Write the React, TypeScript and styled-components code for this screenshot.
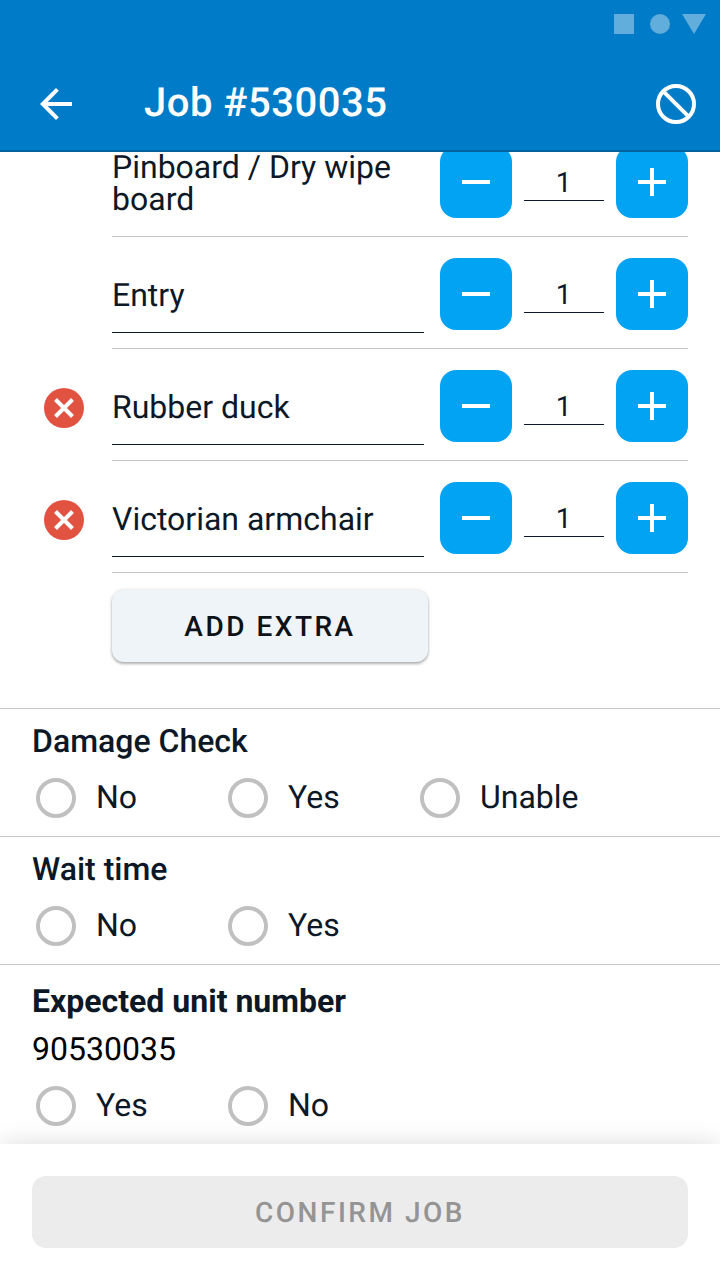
import React from "react";
import styled, { createGlobalStyle } from "styled-components";

const GlobalStyle = createGlobalStyle`
  *, *::before, *::after { box-sizing: border-box; }
  html, body { margin: 0; padding: 0; background: #fff; }
  body { overflow: hidden; }
  button, input { font: inherit; color: inherit; border: 0; padding: 0; margin: 0; background: none; outline: none; text-rendering: inherit; }
`;

const Screen = styled.div`
  display: flex;
  flex-direction: column;
  width: 720px;
  height: 1280px;
  overflow: hidden;
  background: #fff;
  color: #0d1826;
  font-family: Roboto, "Liberation Sans", sans-serif;
  font-size: 32px;
  text-rendering: geometricPrecision;
`;

const Header = styled.header`
  flex: none;
  height: 152px;
  background: #007bc7;
  border-bottom: 2px solid #0062a0;
`;

const StatusBar = styled.div`
  display: flex;
  justify-content: flex-end;
  height: 48px;
  padding: 14px 14px 0 0;
`;

const Toolbar = styled.div`
  display: flex;
  align-items: center;
  height: 112px;
  padding: 0 24px 0 40px;
`;

const Title = styled.h1`
  flex: 1;
  margin: -3px 0 0 72px;
  color: #fff;
  font-size: 40px;
  font-weight: 500;
  line-height: 48px;
  letter-spacing: 0.5px;
`;

const Content = styled.main`
  flex: 1;
  min-height: 0;
  overflow: hidden;
`;

const Items = styled.section`
  height: 584px;
  margin-top: -27px;
  border-bottom: 1px solid #c6c8ca;
`;

const ItemRow = styled.div`
  display: flex;
  height: 112px;
  padding-right: 32px;
`;

const RemoveSlot = styled.div`
  display: flex;
  justify-content: flex-end;
  width: 84px;
  margin-right: 28px;
  padding-top: 39px;
`;

const ItemBody = styled.div`
  display: flex;
  flex: 1;
  border-bottom: 1px solid #c6c6c6;
`;

const NameText = styled.div`
  width: 312px;
  margin-right: 16px;
  padding-top: 26px;
  line-height: 32px;
`;

const NameInput = styled.input`
  width: 312px;
  height: 76px;
  margin: 20px 16px 0 0;
  border-bottom: 1px solid #0d1826;
`;

const Stepper = styled.div`
  display: flex;
  gap: 12px;
  padding-top: 21px;
`;

const StepButton = styled.button`
  display: flex;
  align-items: center;
  justify-content: center;
  width: 72px;
  height: 72px;
  border-radius: 16px;
  background: #02a3f2;
`;

const Quantity = styled.input`
  width: 80px;
  height: 55px;
  padding: 18px 1px 0 0;
  border-bottom: 1px solid #0d1826;
  font-size: 28px;
  text-align: center;
`;

const AddButton = styled.button`
  display: block;
  width: 316px;
  height: 72px;
  margin: 17px 0 0 112px;
  border-radius: 12px;
  background: #eff4f8;
  box-shadow: 0 2px 3px rgba(0, 0, 0, 0.28), 0 0 4px rgba(0, 0, 0, 0.12);
  color: #0d1216;
  font-size: 28px;
  font-weight: 500;
  letter-spacing: 2.5px;
`;

const Question = styled.section<{ $height: number }>`
  height: ${(p) => p.$height}px;
  padding: 12px 32px 0;
  border-bottom: 1px solid #c6c8ca;
`;

const Heading = styled.h2<{ $bold?: boolean }>`
  margin: ${(p) => (p.$bold ? "4px 0 0" : "0")};
  font-size: 32px;
  font-weight: ${(p) => (p.$bold ? 700 : 500)};
  line-height: 40px;
`;

const UnitNumber = styled.div`
  margin-top: 8px;
  color: #000;
  line-height: 40px;
`;

const Options = styled.div`
  display: flex;
  margin-top: 17px;
`;

const Option = styled.label`
  display: flex;
  align-items: center;
  gap: 20px;
  width: 192px;
  height: 40px;
  padding-left: 4px;
`;

const RadioRing = styled.span`
  flex: none;
  width: 40px;
  height: 40px;
  border: 4px solid #c0c0c0;
  border-radius: 50%;
`;

const OptionLabel = styled.span`
  line-height: 38px;
  margin-top: -2px;
`;

const Footer = styled.footer`
  position: relative;
  flex: none;
  height: 136px;
  padding: 32px;
  background: #fff;
  box-shadow: 0 0 24px rgba(0, 0, 0, 0.14);
`;

const ConfirmButton = styled.button`
  width: 100%;
  height: 72px;
  border-radius: 14px;
  background: #ececec;
  color: #949494;
  font-size: 28px;
  font-weight: 500;
  letter-spacing: 2.5px;
`;

const items = [
  { name: "Pinboard / Dry wipe board", editable: false, removable: false },
  { name: "Entry", editable: true, removable: false },
  { name: "Rubber duck", editable: true, removable: true },
  { name: "Victorian armchair", editable: true, removable: true },
];

function StatusIcons() {
  return (
    <svg width="92" height="20" viewBox="0 0 92 20" fill="#61addb">
      <path d="M0 0h20v20H0zM68 0h24L80 20z" />
      <circle cx="46" cy="10" r="10" />
    </svg>
  );
}

function BackIcon() {
  return (
    <svg width="32" height="32" viewBox="0 0 32 32" fill="none" stroke="#fff" strokeWidth="4">
      <path d="M32 16H3M17.4 1.4L2.8 16l14.6 14.6" />
    </svg>
  );
}

function BlockIcon() {
  return (
    <svg width="40" height="40" viewBox="0 0 40 40" fill="none" stroke="#fff" strokeWidth="4">
      <circle cx="20" cy="20" r="18" />
      <path d="M7.3 7.3l25.4 25.4" />
    </svg>
  );
}

function RemoveIcon() {
  return (
    <svg width="40" height="40" viewBox="0 0 40 40" fill="none">
      <circle cx="20" cy="20" r="20" fill="#e25241" />
      <path d="M11.5 11.5l17 17M28.5 11.5l-17 17" stroke="#fff" strokeWidth="4" />
    </svg>
  );
}

function StepIcon({ plus }: { plus?: boolean }) {
  return (
    <svg width="28" height="28" viewBox="0 0 28 28" fill="#fff">
      <path d={plus ? "M0 12h12V0h4v12h12v4H16v12h-4V16H0z" : "M0 12h28v4H0z"} />
    </svg>
  );
}

function Choices({ options }: { options: string[] }) {
  return (
    <Options>
      {options.map((option) => (
        <Option key={option}>
          <RadioRing />
          <OptionLabel>{option}</OptionLabel>
        </Option>
      ))}
    </Options>
  );
}

export default function App() {
  return (
    <>
      <GlobalStyle />
      <Screen>
        <Header>
          <StatusBar>
            <StatusIcons />
          </StatusBar>
          <Toolbar>
            <BackIcon />
            <Title>Job #530035</Title>
            <BlockIcon />
          </Toolbar>
        </Header>
        <Content>
          <Items>
            {items.map((item) => (
              <ItemRow key={item.name}>
                <RemoveSlot>{item.removable && <RemoveIcon />}</RemoveSlot>
                <ItemBody>
                  {item.editable ? (
                    <NameInput defaultValue={item.name} />
                  ) : (
                    <NameText>{item.name}</NameText>
                  )}
                  <Stepper>
                    <StepButton aria-label="Decrease">
                      <StepIcon />
                    </StepButton>
                    <Quantity defaultValue="1" />
                    <StepButton aria-label="Increase">
                      <StepIcon plus />
                    </StepButton>
                  </Stepper>
                </ItemBody>
              </ItemRow>
            ))}
            <AddButton>ADD EXTRA</AddButton>
          </Items>
          <Question $height={128}>
            <Heading>Damage Check</Heading>
            <Choices options={["No", "Yes", "Unable"]} />
          </Question>
          <Question $height={128}>
            <Heading>Wait time</Heading>
            <Choices options={["No", "Yes"]} />
          </Question>
          <Question $height={200}>
            <Heading $bold>Expected unit number</Heading>
            <UnitNumber>90530035</UnitNumber>
            <Choices options={["Yes", "No"]} />
          </Question>
        </Content>
        <Footer>
          <ConfirmButton>CONFIRM JOB</ConfirmButton>
        </Footer>
      </Screen>
    </>
  );
}
